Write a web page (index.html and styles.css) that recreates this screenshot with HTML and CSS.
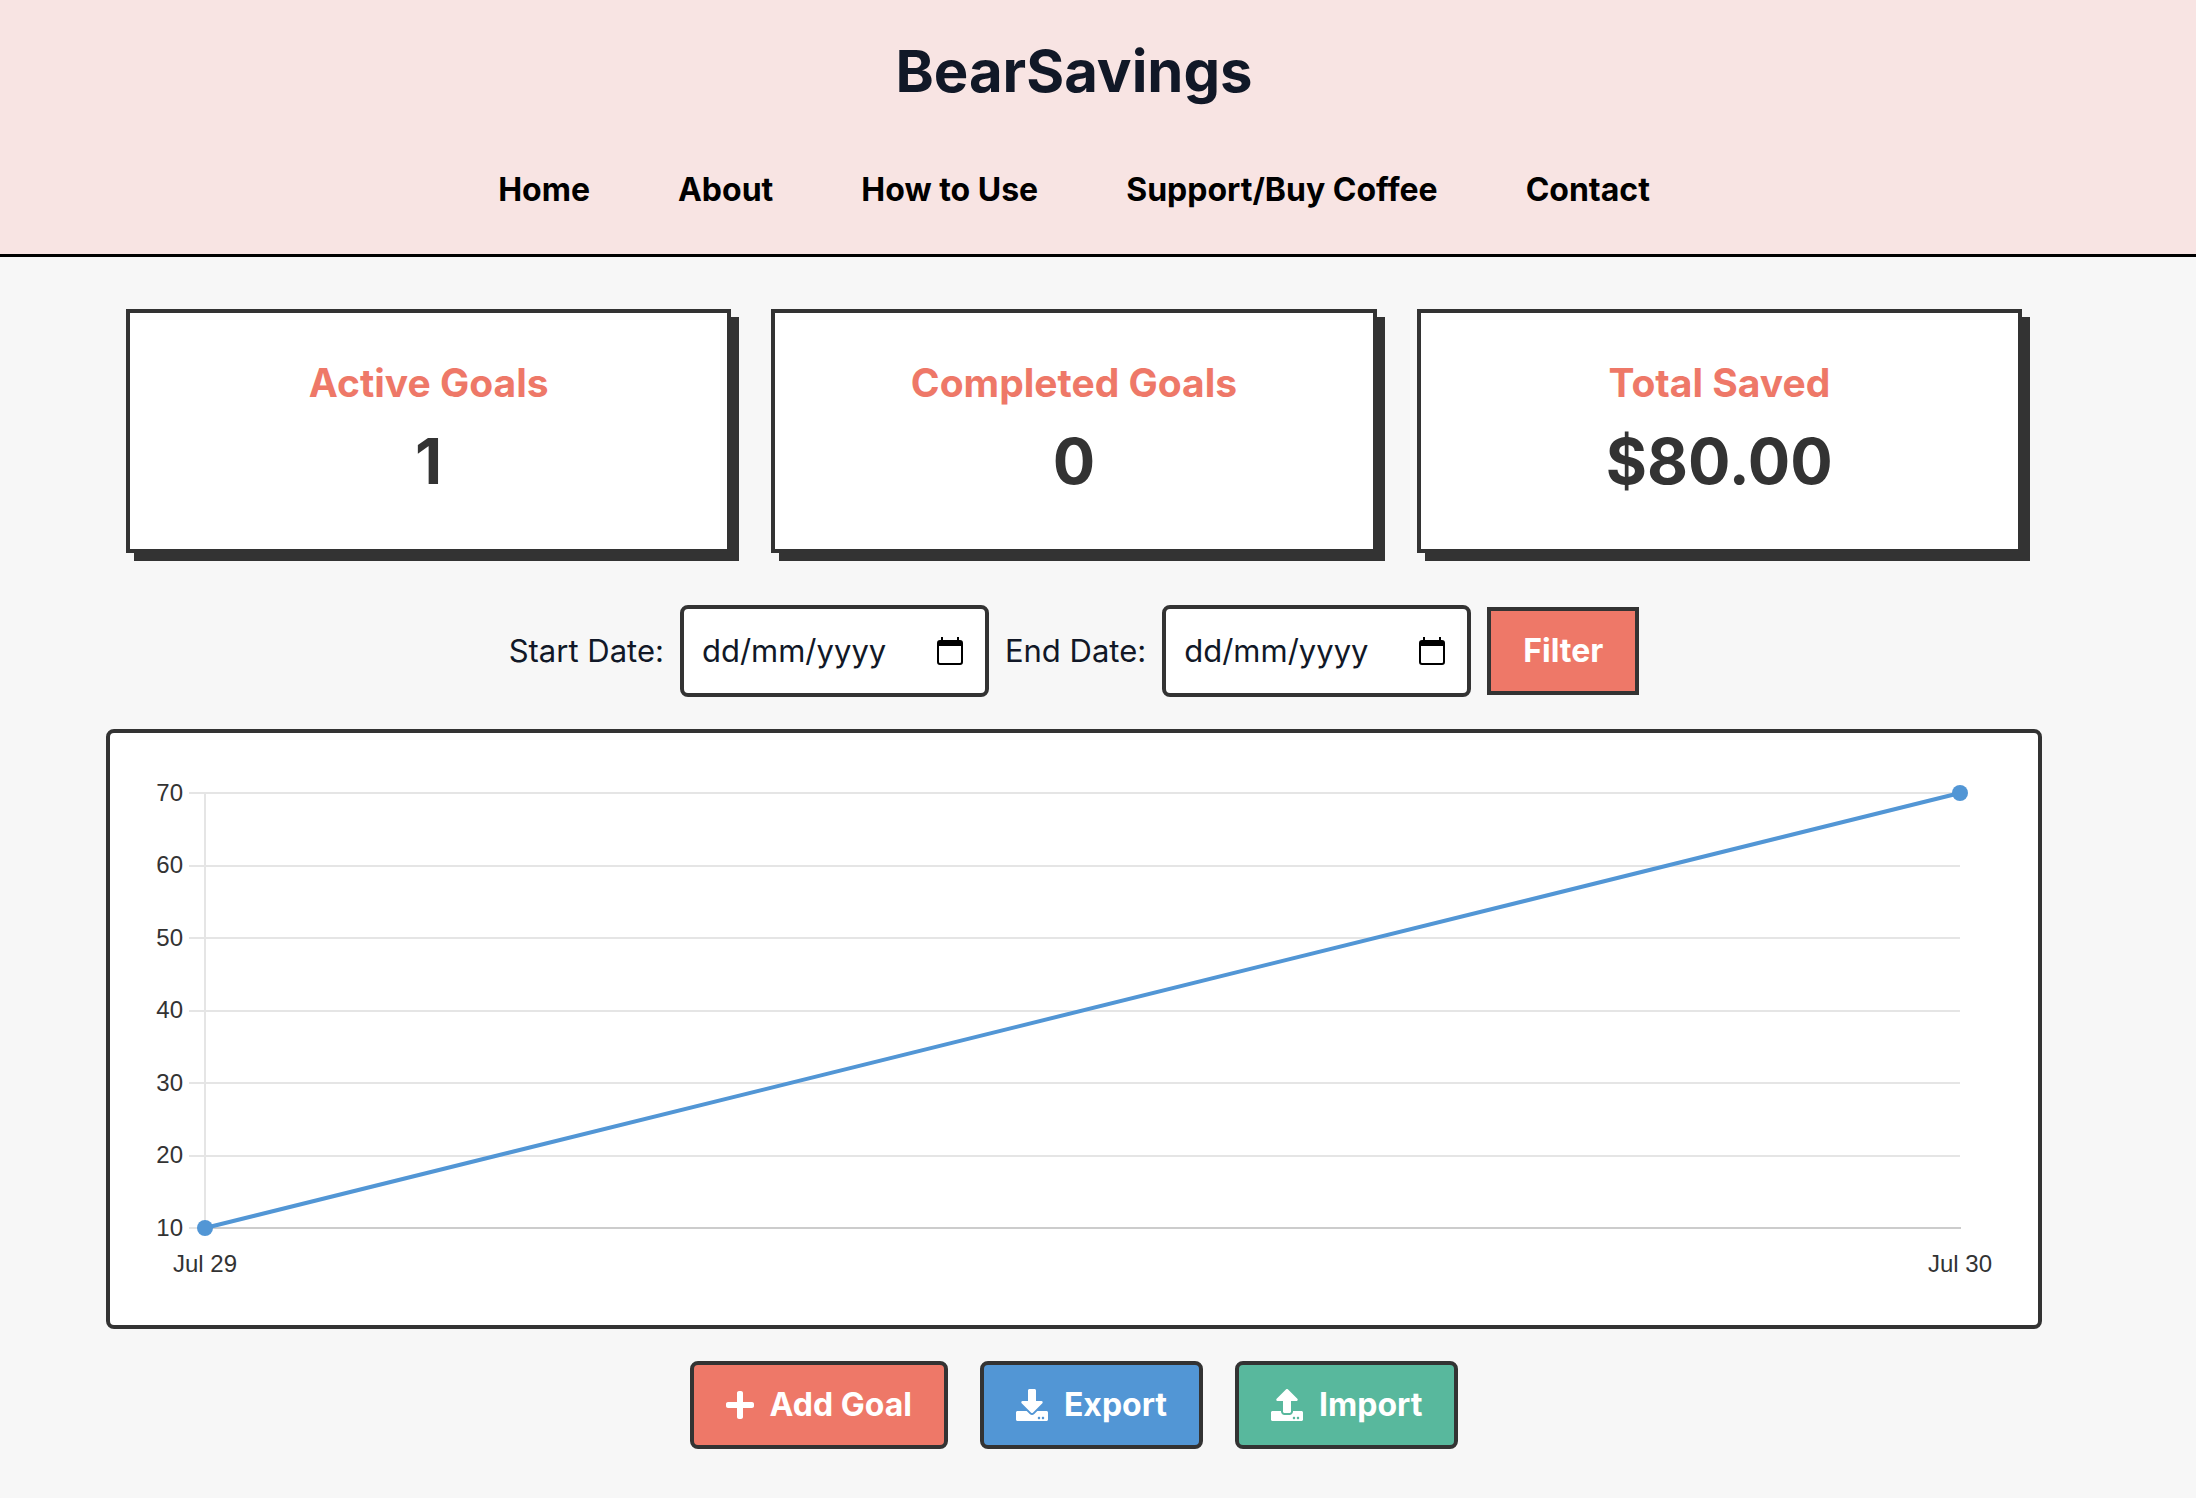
FILE: index.html
```html
<!DOCTYPE html>
<html lang="en">

<head>
    <meta charset="UTF-8">
    <meta name="viewport" content="width=device-width, initial-scale=1.0">
    <title>BearSavings</title>
    <link rel="stylesheet" href="styles.css">
</head>

<body>
    <header class="header">
        <h1>BearSavings</h1>
        <nav class="nav">
            <a href="#home">Home</a>
            <a href="#about">About</a>
            <a href="#how-to-use">How to Use</a>
            <a href="#support">Support/Buy Coffee</a>
            <a href="#contact">Contact</a>
        </nav>
    </header>

    <main class="container">
        <!-- Summary cards -->
        <section class="stats">
            <div class="card">
                <h2>Active Goals</h2>
                <p>1</p>
            </div>
            <div class="card">
                <h2>Completed Goals</h2>
                <p>0</p>
            </div>
            <div class="card">
                <h2>Total Saved</h2>
                <p>$80.00</p>
            </div>
        </section>

        <!-- Date filter -->
        <form class="filter">
            <label for="start-date">Start Date:</label>
            <div class="date-field">
                <input type="text" id="start-date" placeholder="dd/mm/yyyy">
                <button type="button" class="calendar-button" aria-label="Pick start date">
                    <svg viewBox="0 0 26 28" width="26" height="28">
                        <path fill-rule="evenodd" d="M4 0h2v3h14V0h2v3h1a3 3 0 0 1 3 3v19a3 3 0 0 1-3 3H3a3 3 0 0 1-3-3V6a3 3 0 0 1 3-3h1zM2 9v16a1 1 0 0 0 1 1h20a1 1 0 0 0 1-1V9z" />
                    </svg>
                </button>
            </div>
            <label for="end-date">End Date:</label>
            <div class="date-field">
                <input type="text" id="end-date" placeholder="dd/mm/yyyy">
                <button type="button" class="calendar-button" aria-label="Pick end date">
                    <svg viewBox="0 0 26 28" width="26" height="28">
                        <path fill-rule="evenodd" d="M4 0h2v3h14V0h2v3h1a3 3 0 0 1 3 3v19a3 3 0 0 1-3 3H3a3 3 0 0 1-3-3V6a3 3 0 0 1 3-3h1zM2 9v16a1 1 0 0 0 1 1h20a1 1 0 0 0 1-1V9z" />
                    </svg>
                </button>
            </div>
            <button type="button" class="filter-button">Filter</button>
        </form>

        <!-- Savings chart -->
        <section class="chart">
            <svg viewBox="0 0 1928 592" role="img" aria-label="Savings per day">
                <g class="grid">
                    <path d="M79 60H1850M79 133H1850M79 205H1850M79 278H1850M79 350H1850M79 423H1850M79 495H1850" />
                    <path d="M95 60V495" />
                </g>
                <path class="axis" d="M95 495H1851" />
                <g class="y-labels">
                    <text x="73" y="68">70</text>
                    <text x="73" y="140">60</text>
                    <text x="73" y="213">50</text>
                    <text x="73" y="285">40</text>
                    <text x="73" y="358">30</text>
                    <text x="73" y="430">20</text>
                    <text x="73" y="503">10</text>
                </g>
                <g class="x-labels">
                    <text x="95" y="539">Jul 29</text>
                    <text x="1850" y="539">Jul 30</text>
                </g>
                <path class="line" d="M95 495L1850 60" />
                <circle class="point" cx="95" cy="495" r="8" />
                <circle class="point" cx="1850" cy="60" r="8" />
            </svg>
        </section>

        <!-- Actions -->
        <div class="actions">
            <button type="button" class="button add">
                <svg viewBox="0 0 448 512" width="28" height="32">
                    <path d="M416 208H272V64c0-17.670-14.330-32-32-32h-32c-17.670 0-32 14.330-32 32v144H32c-17.670 0-32 14.330-32 32v32c0 17.670 14.330 32 32 32h144v144c0 17.670 14.330 32 32 32h32c17.670 0 32-14.330 32-32V304h144c17.670 0 32-14.330 32-32v-32c0-17.670-14.330-32-32-32z" />
                </svg>
                Add Goal
            </button>
            <button type="button" class="button export">
                <svg viewBox="0 0 512 512" width="32" height="32">
                    <path fill-rule="evenodd" d="M216 0h80c13.300 0 24 10.700 24 24v168h87.700c17.800 0 26.700 21.500 14.100 34.100L269.700 378.300c-7.500 7.500-19.800 7.500-27.300 0L90.100 226.100c-12.600-12.600-3.700-34.100 14.100-34.100H192V24c0-13.300 10.700-24 24-24zm296 376v112c0 13.300-10.700 24-24 24H24c-13.300 0-24-10.700-24-24V376c0-13.300 10.700-24 24-24h146.700l49 49c20.100 20.100 52.500 20.100 72.600 0l49-49H488c13.300 0 24 10.700 24 24zm-124 88c0-11-9-20-20-20s-20 9-20 20 9 20 20 20 20-9 20-20zm64 0c0-11-9-20-20-20s-20 9-20 20 9 20 20 20 20-9 20-20z" />
                </svg>
                Export
            </button>
            <button type="button" class="button import">
                <svg viewBox="0 0 512 512" width="32" height="32">
                    <path fill-rule="evenodd" d="M296 384h-80c-13.300 0-24-10.700-24-24V192h-87.700c-17.800 0-26.700-21.500-14.100-34.100L242.300 5.700c7.500-7.500 19.800-7.500 27.300 0l152.200 152.200c12.600 12.600 3.700 34.100-14.100 34.100H320v168c0 13.300-10.700 24-24 24zm216-8v112c0 13.300-10.700 24-24 24H24c-13.300 0-24-10.700-24-24V376c0-13.300 10.700-24 24-24h136v8c0 30.900 25.100 56 56 56h80c30.900 0 56-25.100 56-56v-8h136c13.300 0 24 10.700 24 24zm-124 88c0-11-9-20-20-20s-20 9-20 20 9 20 20 20 20-9 20-20zm64 0c0-11-9-20-20-20s-20 9-20 20 9 20 20 20 20-9 20-20z" />
                </svg>
                Import
            </button>
        </div>
    </main>
</body>

</html>
```

FILE: styles.css
```css
* {
    box-sizing: border-box;
    margin: 0;
    padding: 0;
}

body {
    font-family: Inter, "Liberation Sans", sans-serif;
    font-size: 31px;
    line-height: 48px;
    color: #111827;
    background: #f7f7f7;
}

button,
input {
    font: inherit;
    color: inherit;
}

button {
    cursor: pointer;
}

.header {
    padding: 32px 48px 40px 0;
    text-align: center;
    background: #f8e4e3;
    border-bottom: 3px solid #000;
}

.header h1 {
    margin-bottom: 56px;
    font-size: 58px;
    line-height: 78px;
}

.nav {
    display: flex;
    justify-content: center;
    gap: 88px;
}

.nav a {
    font-size: 32px;
    font-weight: 700;
    color: #000;
    text-decoration: none;
}

.container {
    padding: 52px 154px 48px 106px;
}

/* cards */

.stats {
    display: grid;
    grid-template-columns: repeat(3, 1fr);
    gap: 40px;
    margin: 0 20px 52px;
}

.card {
    padding: 40px 40px 48px;
    text-align: center;
    background: #fff;
    border: 4px solid #333;
    box-shadow: 8px 8px 0 #333;
}

.card h2 {
    margin-bottom: 8px;
    font-size: 39px;
    line-height: 60px;
    color: #ee7868;
}

.card p {
    font-size: 63px;
    font-weight: 700;
    line-height: 80px;
    color: #333;
}

/* filter */

.filter {
    display: flex;
    justify-content: center;
    align-items: center;
    gap: 16px;
    margin-bottom: 32px;
}

.date-field {
    display: flex;
    align-items: center;
    width: 309px;
    height: 92px;
    padding: 0 22px 0 18px;
    background: #fff;
    border: 4px solid #333;
    border-radius: 8px;
}

.date-field input {
    flex: 1;
    min-width: 0;
    border: 0;
    outline: 0;
    background: none;
}

.date-field input::placeholder {
    color: #111827;
    opacity: 1;
}

.calendar-button {
    display: flex;
    border: 0;
    background: none;
}

.filter-button {
    height: 88px;
    padding: 0 32px;
    font-size: 32px;
    font-weight: 700;
    color: #fff;
    background: #ee7868;
    border: 4px solid #333;
}

/* chart */

.chart {
    margin-bottom: 32px;
    background: #fff;
    border: 4px solid #333;
    border-radius: 8px;
}

.chart svg {
    display: block;
    width: 100%;
    font-family: "Liberation Sans", Arial, sans-serif;
    font-size: 24px;
    fill: #333;
}

.grid {
    stroke: #e5e5e5;
    stroke-width: 2;
}

.axis {
    stroke: #ccc;
    stroke-width: 2;
}

.line {
    stroke: #5296d5;
    stroke-width: 4;
}

.point {
    fill: #5296d5;
}

.y-labels {
    text-anchor: end;
}

.x-labels {
    text-anchor: middle;
}

/* buttons */

.actions {
    display: flex;
    justify-content: center;
    gap: 32px;
}

.button {
    display: flex;
    align-items: center;
    gap: 16px;
    height: 88px;
    padding: 0 32px;
    font-size: 32px;
    font-weight: 700;
    color: #fff;
    border: 4px solid #333;
    border-radius: 8px;
}

.button svg {
    fill: #fff;
}

.add {
    background: #ee7868;
}

.export {
    background: #5296d5;
}

.import {
    background: #58b89d;
}
```
